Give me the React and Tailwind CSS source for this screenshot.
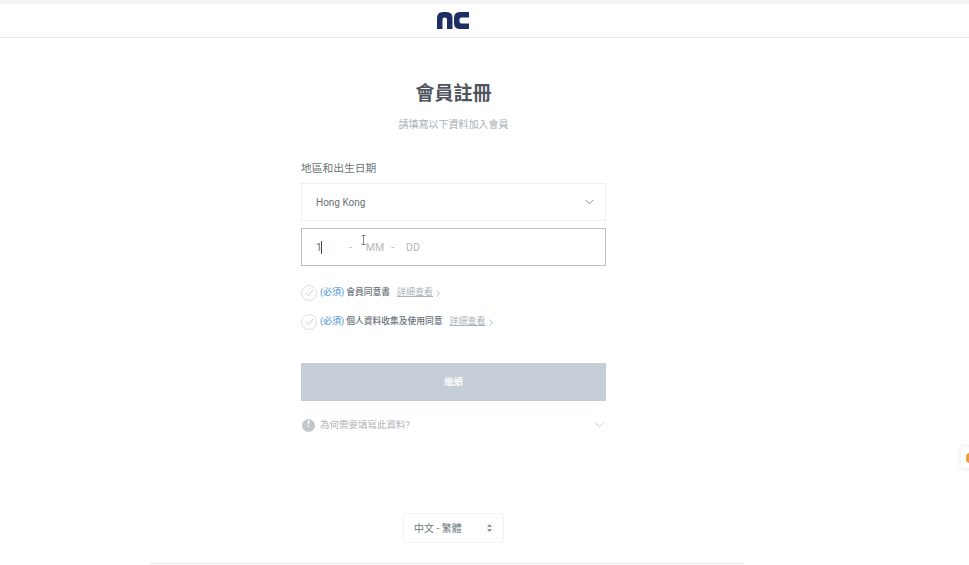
const font = { fontFamily: 'Roboto, "Noto Sans CJK TC", "Noto Sans", sans-serif' };

function Check() {
  return (
    <span className="flex h-4 w-4 shrink-0 items-center justify-center rounded-full border border-[#dde0e3] bg-white">
      <svg width="9" height="8" viewBox="0 0 9 8" fill="none">
        <path d="M1 4.2 L3.4 6.6 L8 1" stroke="#c5ccd2" strokeWidth="1" />
      </svg>
    </span>
  );
}

function Row({ text, mt }) {
  return (
    <div className={`flex h-4 items-center ${mt}`}>
      <Check />
      <span className="ml-[3px] text-[9px] font-medium text-[#6aa5dc]">(必須)</span>
      <span className="ml-[2px] text-[8.75px] font-medium text-[#6b727a]">{text}</span>
      <span className="ml-[7px] text-[9px] text-[#adb3ba] underline">詳細查看</span>
      <svg className="ml-[3px]" width="4" height="7" viewBox="0 0 4 7" fill="none">
        <path d="M0.5 0.5 L3.5 3.5 L0.5 6.5" stroke="#b5bbc2" strokeWidth="0.9" />
      </svg>
    </div>
  );
}

export default function App() {
  return (
    <div className="relative flex h-[565px] w-[969px] flex-col overflow-hidden bg-white" style={font}>
      <div className="h-[4px] bg-[#f4f4f4]" />
      <header className="flex h-[34px] items-center justify-center border-b border-[#e9e9e9] bg-white pr-[63px]">
        <svg width="32" height="17" viewBox="0 0 32 17">
          <path
            d="M0 17 V6 Q0 0 6 0 H9.5 Q15.5 0 15.5 6 V17 H10 V7.5 Q10 5.5 8 5.5 H7.5 Q5.5 5.5 5.5 7.5 V17 Z"
            fill="#1e2f66"
          />
          <path d="M32 0 H23 Q17 0 17 6 V11 Q17 17 23 17 H32 V11.5 H24.5 Q22.5 11.5 22.5 9.5 V7.5 Q22.5 5.5 24.5 5.5 H32 Z" fill="#1e2f66" />
        </svg>
      </header>

      <main className="ml-[301px] flex w-[305px] flex-col">
        <h1 className="mt-[41px] h-[30px] text-center text-[19px] leading-[30px] font-bold text-[#50555d]">會員註冊</h1>
        <p className="mt-[7px] h-[18px] text-center text-[10px] leading-[18px] text-[#a9afb6]">請填寫以下資料加入會員</p>
        <label className="mt-[26px] h-[18px] text-[10.75px] leading-[18px] text-[#6e747b]">地區和出生日期</label>
        <div className="mt-[5px] flex h-[38px] items-center justify-between border border-[#eceef0] pr-[11px] pl-[14px]">
          <span className="pt-[1px] text-[10px] text-[#6b7178]">Hong Kong</span>
          <svg width="9" height="6" viewBox="0 0 9 6" fill="none">
            <path d="M0.5 0.8 L4.5 4.8 L8.5 0.8" stroke="#8f959b" strokeWidth="1" />
          </svg>
        </div>
        <div className="relative mt-[7px] flex h-[38px] items-center border border-[#bcc0c3] pt-[1px] pl-[14px] text-[10.5px] text-[#b3b8bd]">
          <span className="text-[#6b7178]">1</span>
          <span className="-ml-[1px] h-[13px] w-px bg-[#444]" />
          <span className="ml-[27px]">-</span>
          <span className="ml-[14px]">MM</span>
          <span className="ml-[7px]">-</span>
          <span className="ml-[12px]">DD</span>
          <svg className="absolute top-[6px] left-[59px]" width="5" height="10" viewBox="0 0 5 10" fill="none">
            <path d="M0.5 0.5 H4.5 M2.5 0.5 V9.5 M0.5 9.5 H4.5" stroke="#777" strokeWidth="0.9" />
          </svg>
        </div>
        <Row text="會員同意書" mt="mt-[19px]" />
        <Row text="個人資料收集及使用同意" mt="mt-[13px]" />
        <button className="mt-[33px] h-[38px] bg-[#c5ced7] text-[9.5px] font-medium text-white">繼續</button>
        <div className="mt-[15px] flex h-[18px] items-center pr-[2px] pl-[1px]">
          <span className="flex h-[13px] w-[13px] items-center justify-center rounded-full bg-[#c3c7cb] text-[9px] font-bold text-white">!</span>
          <span className="ml-[5px] text-[9.5px] text-[#b1b6bb]">為何需要填寫此資料?</span>
          <svg className="ml-auto" width="9" height="6" viewBox="0 0 9 6" fill="none">
            <path d="M0.5 0.8 L4.5 4.8 L8.5 0.8" stroke="#c9cdd1" strokeWidth="1" />
          </svg>
        </div>
      </main>

      <div className="mt-[79px] ml-[403px] flex h-[30px] w-[101px] items-center justify-between rounded-[3px] border border-[#f1f2f3] pr-[11px] pl-[10px]">
        <span className="text-[10px] text-[#70767c]">中文 - 繁體</span>
        <svg width="5" height="8" viewBox="0 0 5 8">
          <path d="M2.5 0 L5 3 H0 Z M2.5 8 L0 5 H5 Z" fill="#8a9096" />
        </svg>
      </div>
      <div className="mt-[20px] ml-[150px] h-px w-[594px] bg-[#e9e9e9]" />

      <div className="absolute top-[447px] left-[961px] flex h-[21px] w-[20px] items-center rounded-[4px] bg-white pl-[5px] shadow-[0_0_6px_rgba(0,0,0,0.12)]">
        <span className="h-[10px] w-[8px] rounded-full bg-[#f39a3c]" />
      </div>
    </div>
  );
}
